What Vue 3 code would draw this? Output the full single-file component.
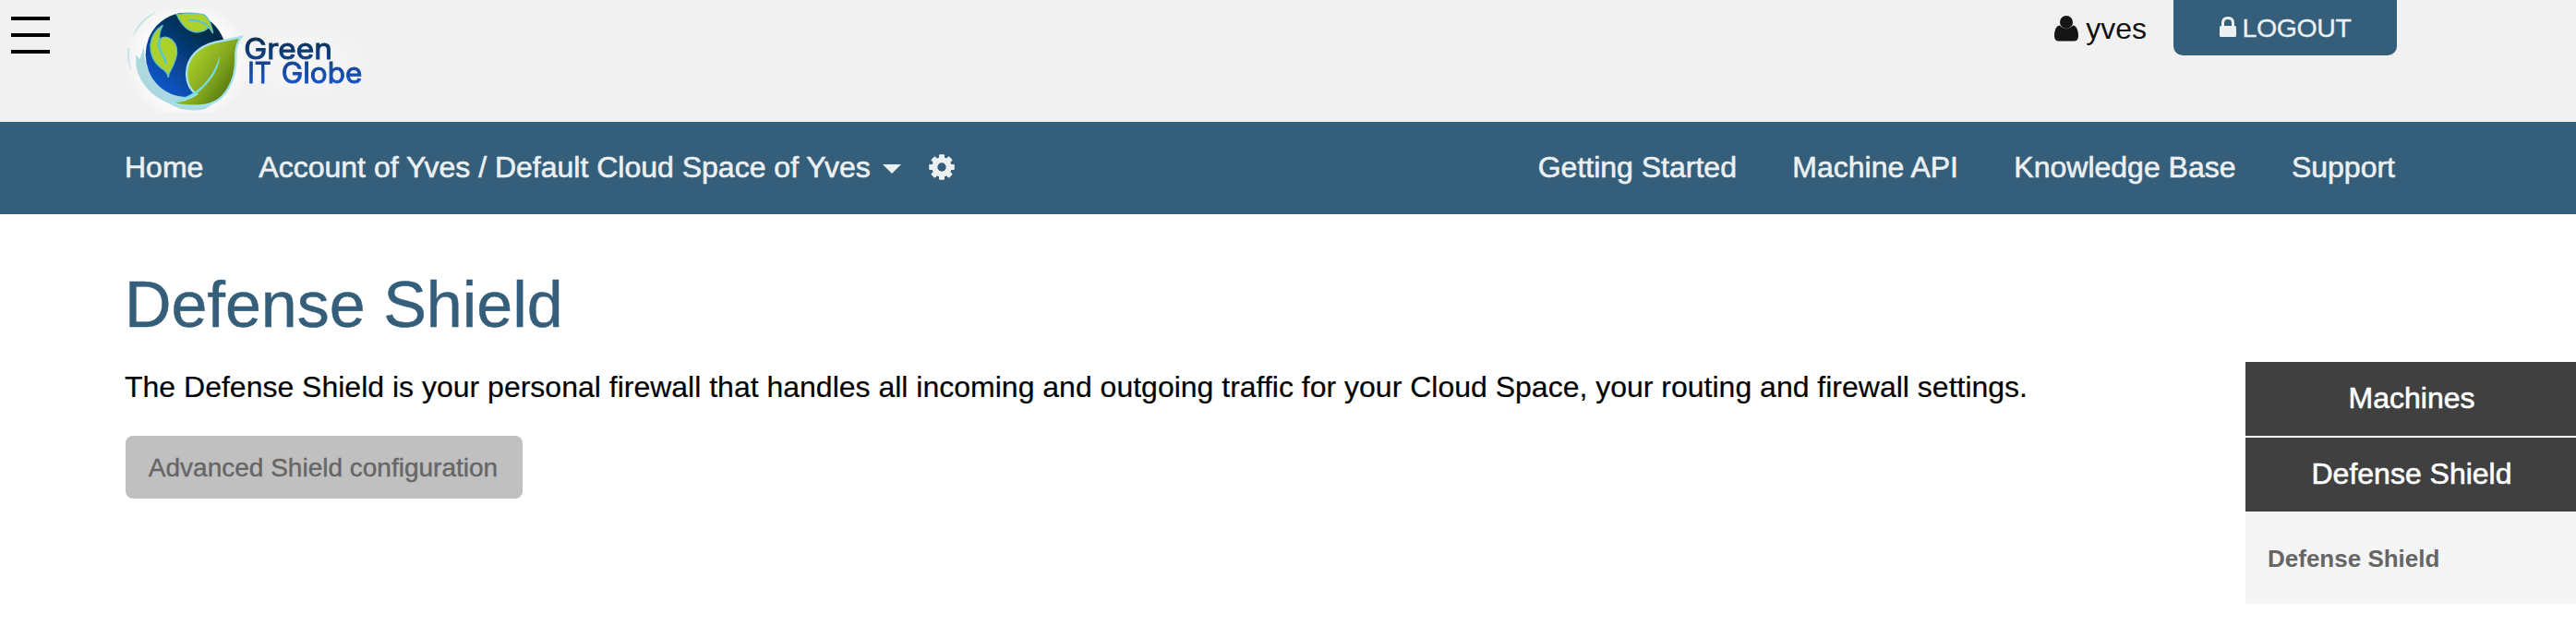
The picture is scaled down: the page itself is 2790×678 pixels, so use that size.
<script setup>
const links = ['Getting Started', 'Machine API', 'Knowledge Base', 'Support']
const machines = ['Machines', 'Defense Shield']
</script>

<template>
  <div class="page">
    <header class="top">
      <button class="burger" aria-label="Menu"><i></i><i></i><i></i></button>
      <svg class="logo" viewBox="414 30 786 336" role="img">
        <defs>
          <linearGradient id="ocean" x1="0.8" y1="0.1" x2="0.2" y2="0.9">
            <stop offset="0.1" stop-color="#022c46" />
            <stop offset="0.5" stop-color="#063c7c" />
            <stop offset="1" stop-color="#0d56c8" />
          </linearGradient>
          <linearGradient id="leaf" x1="0.2" y1="0.3" x2="0.9" y2="0.75">
            <stop offset="0.1" stop-color="#a5cc27" />
            <stop offset="0.55" stop-color="#85a81f" />
            <stop offset="1" stop-color="#4f7410" />
          </linearGradient>
          <linearGradient id="ink" gradientUnits="userSpaceOnUse" x1="0" y1="120" x2="0" y2="275">
            <stop offset="0" stop-color="#0a2f52" />
            <stop offset="1" stop-color="#1a55c6" />
          </linearGradient>
          <radialGradient id="glow">
            <stop offset="0.6" stop-color="#fff" />
            <stop offset="1" stop-color="#fff" stop-opacity="0" />
          </radialGradient>
          <filter id="soft"><feGaussianBlur stdDeviation="1.4" /></filter>
        </defs>
        <ellipse cx="608" cy="200" rx="205" ry="200" fill="url(#glow)" />
        <ellipse cx="965" cy="200" rx="240" ry="120" fill="url(#glow)" opacity="0.25" />
        <g filter="url(#soft)">
          <path d="M432 116Q452 66 504 40Q458 72 432 116ZM416 158Q412 195 425 227Q416 192 420 158Z" fill="#b5dfe2" stroke="#b5dfe2" stroke-width="1" />
          <path d="M441 178L454 193L468 150Q466 250 545 300Q600 330 690 300L748 268Q720 325 665 355Q600 368 548 336Q462 300 443 220Z" fill="#acd9df" />
          <ellipse cx="604" cy="178" rx="131" ry="137" fill="url(#ocean)" />
          <path d="M529 82Q515 106 519 128Q535 112 558 129Q582 151 572 188Q564 214 549 240L547 252Q544 232 522 220Q487 192 489 145Q494 103 529 82Z" fill="#acd12a" stroke="#61c2c7" stroke-width="4" />
          <path d="M520 127Q511 145 521 165Q534 184 541 208" fill="none" stroke="#5fc5cc" stroke-width="8" />
          <path d="M574 47Q628 38 660 47Q683 57 692 108Q683 96 677 87Q670 103 638 105Q599 101 574 47Z" fill="#acd12a" stroke="#61c2c7" stroke-width="4" />
          <path d="M611 66Q661 63 680 92" fill="none" stroke="#5fc5cc" stroke-width="7" />
          <path d="M784 120Q763 149 766 190Q766 247 742 287Q711 341 650 343Q594 347 552 333Q608 327 638 306Q607 285 606 240Q609 161 700 137Q740 130 784 120Z" fill="url(#leaf)" stroke="#a6e2ee" stroke-width="7" />
          <path d="M714 184Q708 248 638 305Q598 327 552 333Q624 315 660 277Q698 238 714 184Z" fill="#7bdce5" stroke="#7bdce5" stroke-width="1" />
          <g class="wordmark" fill="url(#ink)" stroke="url(#ink)" stroke-width="3">
            <text x="793" y="191" textLength="287" lengthAdjust="spacingAndGlyphs">Green</text>
            <text x="805" y="271" textLength="76" lengthAdjust="spacingAndGlyphs">IT</text>
            <text x="914" y="271" textLength="263" lengthAdjust="spacingAndGlyphs">Globe</text>
          </g>
        </g>
      </svg>
      <div class="user">
        <svg class="person" viewBox="0 0 26 28"><circle cx="13" cy="7" r="7" /><path d="M5.600 10.600Q13 18 20.400 10.600C24.500 11 26 17 26 22Q26 27.600 21 27.600H5Q0 27.600 0 22C0 17 1.500 11 5.600 10.600Z" /></svg>
        <span>yves</span>
      </div>
      <button class="logout">
        <svg class="lock" viewBox="0 0 18 22"><path d="M3.500 11V7Q3.500 1.500 9 1.500T14.500 7V11" fill="none" stroke="currentColor" stroke-width="3" /><rect y="10" width="18" height="12" rx="1.500" fill="currentColor" /></svg>
        <span>LOGOUT</span>
      </button>
    </header>

    <nav class="nav">
      <a class="home">Home</a>
      <a class="account">Account of Yves / Default Cloud Space of Yves</a>
      <i class="caret"></i>
      <svg class="gear" viewBox="-14 -14 28 28">
        <g fill="currentColor">
          <rect v-for="n in 4" :key="n" x="-3" y="-13.800" width="6" height="27.600" rx="1" :transform="`rotate(${n * 45})`" />
        </g>
        <circle r="7.700" fill="none" stroke="currentColor" stroke-width="6" />
        <circle r="4.700" class="hub" />
      </svg>
      <div class="links"><a v-for="l in links" :key="l">{{ l }}</a></div>
    </nav>

    <div class="body">
      <main>
        <h1>Defense Shield</h1>
        <p>The Defense Shield is your personal firewall that handles all incoming and outgoing traffic for your Cloud Space, your routing and firewall settings.</p>
        <button class="advanced">Advanced Shield configuration</button>
      </main>
      <aside>
        <a v-for="m in machines" :key="m" class="tab">{{ m }}</a>
        <div class="current">Defense Shield</div>
      </aside>
    </div>
  </div>
</template>

<style>
body { background: #fff; }
</style>

<style scoped>
.page { width: 2790px; height: 678px; overflow: hidden; font: 32px/40px "Liberation Sans", Arial, sans-serif; color: #000; }
button { border: 0; padding: 0; font: inherit; background: none; }
.top { height: 132px; background: #f1f1f1; display: flex; align-items: flex-start; }
.burger { display: flex; flex-direction: column; gap: 14px; width: 42px; margin: 18px 84px 0 12px; }
.burger i { height: 4px; background: #000; }
.logo { width: 262px; height: 112px; margin-top: 10px; }
.wordmark { font: 92px Inter, sans-serif; }
.user { margin-left: auto; margin-right: 29px; padding-top: 11px; display: flex; color: #111; }
.person { width: 26px; height: 28px; margin: 6px 8px 0 0; fill: #151515; }
.logout { width: 242px; height: 60px; margin-right: 194px; border-radius: 0 0 10px 10px; background: #355e7b; color: #ecf0f1; display: flex; justify-content: center; font-size: 28.500px; -webkit-text-stroke: 0.3px #ecf0f1; }
.lock { width: 18px; height: 22px; margin: 18px 7px 0 0; }
.logout span { padding-top: 10px; letter-spacing: -0.4px; }
.nav { height: 100px; box-sizing: border-box; padding: 29px 196px 0 135px; background: #355e7b; color: #ecf0f1; display: flex; -webkit-text-stroke: 0.6px #ecf0f1; }
.home { margin-right: 60px; }
.caret { margin: 17px 30px 0 13px; width: 0; height: 0; border: 10px solid transparent; border-top-color: #ecf0f1; border-bottom: 0; }
.gear { width: 28px; height: 28px; margin-top: 6px; }
.hub { fill: #355e7b; }
.links { margin-left: auto; display: flex; gap: 60.400px; }
.body { display: flex; justify-content: space-between; align-items: flex-start; }
main { padding: 58px 0 0 135px; }
h1 { margin: 0; font-size: 70px; line-height: 80px; font-weight: 400; color: #355e7b; -webkit-text-stroke: 0.5px #355e7b; }
p { margin: 29px 0 0; white-space: nowrap; -webkit-text-stroke: 0.2px #000; }
.advanced { margin: 33px 0 0 1px; width: 430px; height: 68px; border-radius: 8px; background: #c0c0c0; color: #666; font-size: 28px; padding: 1px 2px 0 0; -webkit-text-stroke: 0.4px #666; }
aside { width: 358px; margin-top: 160px; }
.tab { display: block; height: 80px; line-height: 78px; padding-left: 2px; background: #404040; color: #fff; text-align: center; -webkit-text-stroke: 0.6px #fff; }
.tab + .tab { margin-top: 2px; }
.current { height: 100px; line-height: 103px; padding-left: 24px; box-sizing: border-box; background: #f5f5f5; color: #666; font-weight: 700; font-size: 26px; }
</style>
